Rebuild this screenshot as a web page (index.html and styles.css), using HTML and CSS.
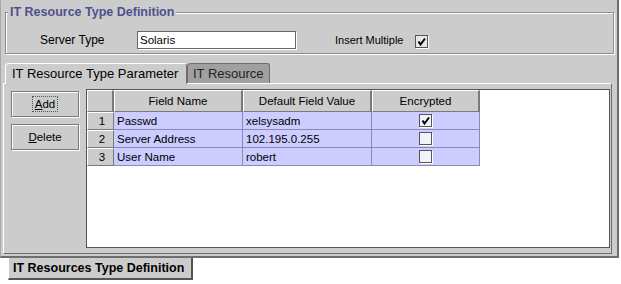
FILE: index.html
```html
<!DOCTYPE html>
<html lang="en">

<head>
  <meta charset="UTF-8" />
  <title>IT Resource Type Definition</title>
  <link rel="stylesheet" href="styles.css">
</head>

<body>
  <div class="window">
    <fieldset class="group">
      <legend>IT Resource Type Definition</legend>
      <div class="field-row">
        <span class="field-label">Server Type</span>
        <input class="text-field" type="text" value="Solaris" />
        <span class="check-label">Insert Multiple</span>
        <span class="check top-check">
          <svg width="9" height="9" viewBox="0 0 9 9"><path d="M1.5 4.5 L3.5 7.5 L8 1.5" stroke="#000" stroke-width="2" fill="none" /></svg>
        </span>
      </div>
    </fieldset>

    <div class="tabs">
      <div class="tab active">IT Resource Type Parameter</div>
      <div class="tab">IT Resource</div>
    </div>

    <div class="tab-panel">
      <div class="buttons">
        <button class="btn"><span class="focus"><u>A</u>dd</span></button>
        <button class="btn"><u>D</u>elete</button>
      </div>

      <div class="table-pane">
        <table class="grid">
          <tr class="head">
            <th class="num-col"></th>
            <th class="name-col">Field Name</th>
            <th class="value-col">Default Field Value</th>
            <th class="enc-col">Encrypted</th>
          </tr>
          <tr>
            <th class="row-num">1</th>
            <td>Passwd</td>
            <td>xelsysadm</td>
            <td class="center">
              <span class="check">
                <svg width="9" height="9" viewBox="0 0 9 9"><path d="M1.5 4.5 L3.5 7.5 L8 1.5" stroke="#000" stroke-width="2" fill="none" /></svg>
              </span>
            </td>
          </tr>
          <tr>
            <th class="row-num">2</th>
            <td>Server Address</td>
            <td>102.195.0.255</td>
            <td class="center"><span class="check"></span></td>
          </tr>
          <tr>
            <th class="row-num">3</th>
            <td>User Name</td>
            <td>robert</td>
            <td class="center"><span class="check"></span></td>
          </tr>
        </table>
      </div>
    </div>
  </div>

  <div class="bottom-tabs">
    <div class="bottom-tab">IT Resources Type Definition</div>
  </div>
</body>

</html>
```

FILE: styles.css
```css
body {
  margin: 0;
  background: #fff;
  font-family: 'Liberation Sans', Arial, sans-serif;
  font-size: 12px;
  color: #000;
}

.window {
  width: 619px;
  height: 258px;
  box-sizing: border-box;
  background: #cccccc;
  border-left: 1px solid #a8a8a8;
  border-right: 2px solid #6e6e6e;
  border-bottom: 2px solid #6e6e6e;
  padding-top: 5px;
}

/* group box at the top */
.group {
  margin: 0 3px 0 4px;
  padding: 12px 0 4px 0;
  border: 1px solid #8c8c8c;
  box-shadow: inset 1px 1px 0 #fff, 1px 1px 0 #fff;
  min-width: 0;
}

.group legend {
  margin-left: 2px;
  padding: 0 2px;
  background: #cccccc;
  font-size: 12.5px;
  font-weight: bold;
  line-height: 14px;
  color: #50508f;
}

.field-row {
  display: flex;
  align-items: center;
  height: 18px;
  padding-left: 34px;
}

.field-label {
  width: 97px;
  font-size: 12px;
}

.text-field {
  width: 159px;
  height: 18px;
  box-sizing: border-box;
  margin: 0;
  padding: 0 2px;
  border: 1px solid #666;
  box-shadow: 1px 1px 0 #fff;
  background: #fff;
  font-family: 'Liberation Sans', Arial, sans-serif;
  font-size: 11.5px;
  color: #000;
  outline: none;
}

.check-label {
  margin-left: 39px;
  font-size: 11px;
}

.check {
  display: inline-flex;
  align-items: center;
  justify-content: center;
  width: 13px;
  height: 13px;
  box-sizing: border-box;
  border: 1px solid #555;
  box-shadow: 1px 1px 0 #fff;
  background: #f2f2fa;
  vertical-align: middle;
}

.top-check {
  margin: 3px 0 0 12px;
  background: #e8e8e8;
}

/* tabs */
.tabs {
  display: flex;
  margin: 9px 0 0 4px;
  height: 20px;
  position: relative;
  z-index: 2;
}

.tab {
  height: 20px;
  box-sizing: border-box;
  border: 1px solid #6e6e6e;
  border-bottom: none;
  border-radius: 4px 3px 0 0;
  background: #a0a0a0;
  color: #222;
  font-size: 13px;
  line-height: 19px;
  padding-left: 5px;
  width: 83px;
}

.tab.active {
  width: 182px;
  height: 21px;
  padding-left: 6px;
  background: #cccccc;
  color: #000;
  border-color: #fff #6e6e6e #6e6e6e #fff;
}

.tab-panel {
  display: flex;
  gap: 7px;
  height: 171px;
  box-sizing: border-box;
  margin: 0 5px 0 2px;
  padding: 5px 1px 5px 7px;
  border: 1px solid;
  border-color: #fff #6e6e6e #6e6e6e #fff;
}

.buttons {
  display: flex;
  flex-direction: column;
  gap: 7px;
  margin-top: 2px;
}

.btn {
  width: 68px;
  height: 26px;
  margin: 0;
  padding: 0;
  background: #cccccc;
  border: 1px solid #7a7a7a;
  box-shadow: inset 1px 1px 0 #fff, 1px 1px 0 #fff;
  font-family: 'Liberation Sans', Arial, sans-serif;
  font-size: 11.5px;
  color: #000;
}

.focus {
  outline: 1px dotted #555;
  padding: 1px 2px;
}

/* table */
.table-pane {
  width: 524px;
  height: 159px;
  box-sizing: border-box;
  border: 1px solid #555;
  background: #fff;
}

.grid {
  border-spacing: 0;
  border-collapse: separate;
  table-layout: fixed;
  font-size: 11.5px;
}

.grid tr {
  height: 18px;
}

.grid tr.head {
  height: 22px;
}

.grid th {
  padding: 0;
  background: #cccccc;
  font-weight: normal;
  border-top: 1px solid #fff;
  border-left: 1px solid #fff;
  border-right: 2px solid #7a7a7a;
  border-bottom: 1px solid #7a7a7a;
}

.num-col {
  width: 24px;
}

.name-col,
.value-col {
  width: 126px;
}

.enc-col {
  width: 105px;
}

.grid th.row-num {
  border-right: 1px solid #7a7a7a;
  text-align: center;
  padding-left: 3px;
}

.grid td {
  padding: 0 0 0 3px;
  background: #ccccff;
  border-right: 1px solid #8a8ab8;
  border-bottom: 1px solid #8a8ab8;
  white-space: nowrap;
}

.grid td.center {
  padding: 0;
  text-align: center;
}

/* bottom tab strip */
.bottom-tabs {
  padding-left: 8px;
}

.bottom-tab {
  width: 185px;
  height: 22px;
  box-sizing: border-box;
  background: #cccccc;
  border-left: 1px solid #fff;
  border-right: 2px solid #555;
  border-bottom: 2px solid #555;
  padding-left: 4px;
  font-size: 12.5px;
  font-weight: bold;
  line-height: 20px;
}
```
